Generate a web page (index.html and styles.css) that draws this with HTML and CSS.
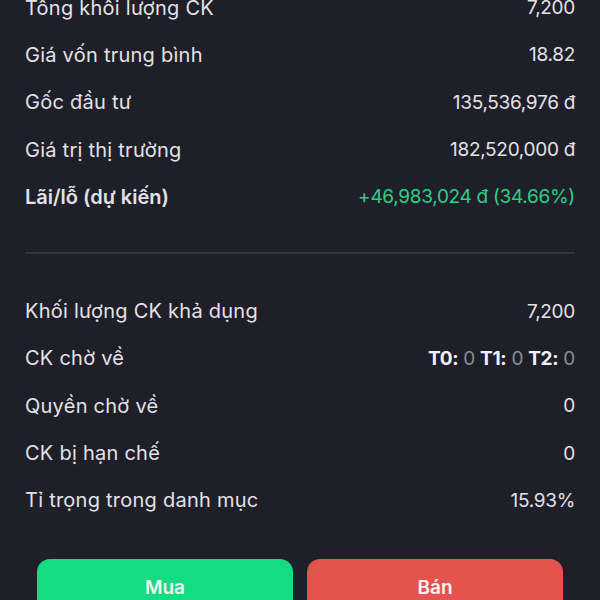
FILE: index.html
```html
<!DOCTYPE html>
<html lang="vi">
<head>
<meta charset="utf-8">
<link rel="stylesheet" href="styles.css">
</head>
<body>
<div class="page">
  <div class="group first">
    <div class="row"><span class="label">Tổng khối lượng CK</span><span class="value">7,200</span></div>
    <div class="row"><span class="label">Giá vốn trung bình</span><span class="value">18.82</span></div>
    <div class="row"><span class="label">Gốc đầu tư</span><span class="value">135,536,976 đ</span></div>
    <div class="row"><span class="label">Giá trị thị trường</span><span class="value">182,520,000 đ</span></div>
    <div class="row"><span class="label strong">Lãi/lỗ (dự kiến)</span><span class="value up">+46,983,024 đ (34.66%)</span></div>
  </div>
  <div class="divider"></div>
  <div class="group">
    <div class="row"><span class="label">Khối lượng CK khả dụng</span><span class="value">7,200</span></div>
    <div class="row"><span class="label">CK chờ về</span><span class="value"><b>T0:</b> <span class="dim">0</span> <b>T1:</b> <span class="dim">0</span> <b>T2:</b> <span class="dim">0</span></span></div>
    <div class="row"><span class="label">Quyền chờ về</span><span class="value">0</span></div>
    <div class="row"><span class="label">CK bị hạn chế</span><span class="value">0</span></div>
    <div class="row"><span class="label">Tỉ trọng trong danh mục</span><span class="value">15.93%</span></div>
  </div>
  <div class="actions">
    <button class="btn buy">Mua</button>
    <button class="btn sell">Bán</button>
  </div>
</div>
</body>
</html>
```
FILE: styles.css
```css
html, body {
  margin: 0;
  padding: 0;
  background: #1f1f2a;
  height: 100%;
  overflow: hidden;
}
body {
  font-family: Inter, "Noto Sans", sans-serif;
  color: #e2e2e6;
}
.page {
  padding: 0 25px;
}
.group.first {
  margin-top: -16px;
}
.row {
  height: 47.3px;
  display: flex;
  align-items: center;
  justify-content: space-between;
}
.label {
  font-size: 20px;
  letter-spacing: 0.25px;
}
.value {
  font-size: 19px;
  letter-spacing: -0.3px;
}
.label.strong {
  font-weight: 600;
  letter-spacing: 0;
}
.value.up {
  color: #2ecf85;
}
.value b {
  font-weight: 700;
  color: #f2f2f4;
}
.dim {
  color: #8d8d96;
}
.divider {
  height: 2px;
  background: #35353f;
  margin: 32px 0 33px;
}
.actions {
  display: flex;
  gap: 14px;
  margin: 35px 12px 0;
}
.btn {
  flex: 1;
  height: 56px;
  border: none;
  border-radius: 13px;
  font-family: inherit;
  font-size: 19px;
  font-weight: 600;
  color: #f4f4f4;
  display: flex;
  justify-content: center;
  padding: 17px 0 0;
}
.buy { background: #13dc83; }
.sell { background: #e4534e; }
```
